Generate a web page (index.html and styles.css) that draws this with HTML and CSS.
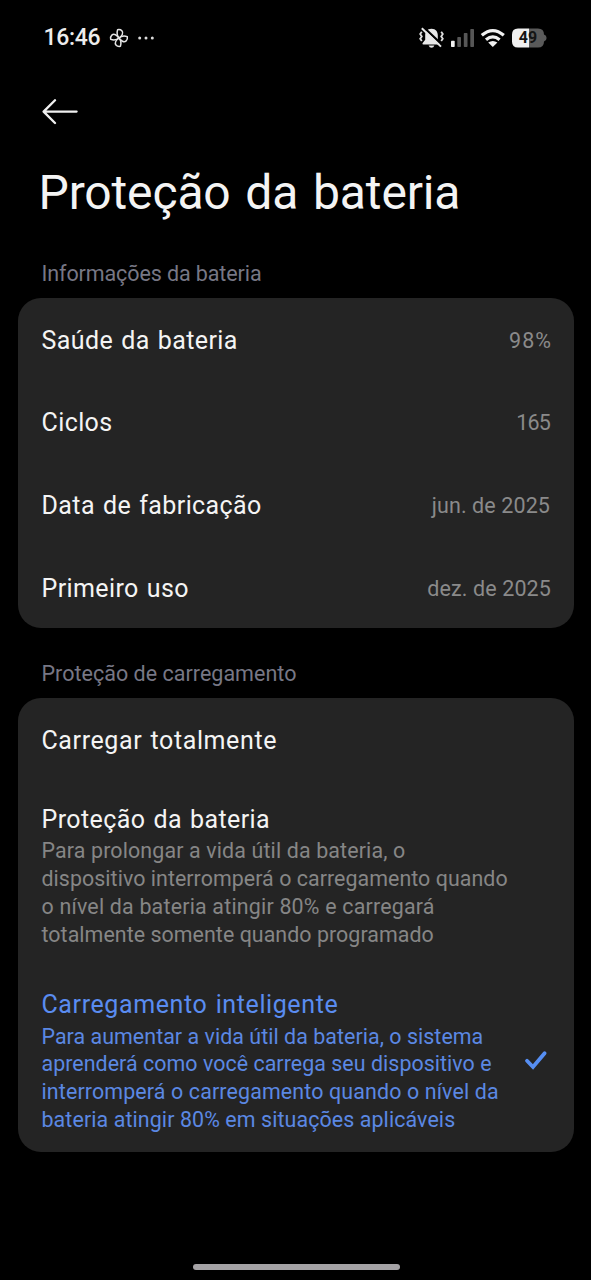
FILE: index.html
```
<!DOCTYPE html>
<html lang="pt-BR">
<head>
<meta charset="utf-8">
<title>Proteção da bateria</title>
<link rel="stylesheet" href="styles.css">
</head>
<body>
<div class="screen">
  <header class="status">
    <span class="clock">16:46</span>
    <svg class="pinwheel" width="20" height="20" viewBox="-10 -10 20 20" fill="none" stroke="#e4e4e4" stroke-width="1.5" stroke-linejoin="round">
      <path id="blade" d="M0 0C-1.8 -2 -2.4 -5 -1.4 -8.3C2.4 -9 4.6 -6.2 3.3 -3.5C2.5 -1.9 1.2 -.8 0 0Z"/>
      <use href="#blade" transform="rotate(90)"/>
      <use href="#blade" transform="rotate(180)"/>
      <use href="#blade" transform="rotate(270)"/>
    </svg>
    <svg class="dots" width="18" height="6" viewBox="0 0 18 6" fill="#dcdcdc"><circle cx="2.7" cy="3" r="1.5"/><circle cx="9" cy="3" r="1.5"/><circle cx="15.3" cy="3" r="1.5"/></svg>
    <div class="indicators">
      <svg width="27" height="22" viewBox="0 0 27 22">
        <path d="M13.5 1.8C9 1.8 7.2 5 7.2 8.4V12.8L4.5 16.2Q4.2 17.4 5.4 17.4H21.6Q22.8 17.4 22.5 16.2L19.8 12.8V8.4C19.8 5 18 1.8 13.5 1.8Z" fill="#e8e8e8"/>
        <path d="M10.6 18.6H16.4Q15.6 20.8 13.5 20.8T10.6 18.6Z" fill="#e8e8e8"/>
        <path d="M3.8 4.8L2.2 7.1L3.8 9.4L2.2 11.7L3.8 14M23.2 4.8L24.8 7.1L23.2 9.4L24.8 11.7L23.2 14" fill="none" stroke="#e0e0e0" stroke-width="1.8"/>
        <path d="M5.5 .1L24.7 18.4" stroke="#000" stroke-width="2.2"/>
        <path d="M3.8 1.2L23 19.6" stroke="#e8e8e8" stroke-width="2"/>
      </svg>
      <svg class="signal" width="24" height="20" viewBox="0 0 24 20" fill="#565656">
        <rect x="0" y="12.8" width="3.7" height="6.2" rx=".7" fill="#f2f2f2"/>
        <rect x="6.3" y="9" width="3.7" height="10" rx=".7"/>
        <rect x="12.8" y="5" width="3.7" height="14" rx=".7"/>
        <rect x="19.3" y="1" width="3.7" height="18" rx=".7"/>
      </svg>
      <svg class="wifi" width="26" height="20" viewBox="0 0 26 20" fill="none" stroke="#f0f0f0" stroke-width="3.2">
        <path d="M1.8 7.3Q12.8 -2.2 23.8 7.3"/>
        <path d="M6 11.8Q12.8 6 19.6 11.8"/>
        <path d="M8.2 14.6Q12.8 11.2 17.4 14.6L12.8 19Z" fill="#f0f0f0" stroke="none"/>
      </svg>
      <div class="battery">
        <svg width="36" height="20" viewBox="0 0 36 20">
          <path d="M6 .5H17V19.5H6Q0 19.5 0 13.5V6.5Q0 .5 6 .5Z" fill="#f0f0f0"/>
          <path d="M17 .5H26Q32 .5 32 6.5Q34.6 7.2 34.6 10T32 13.5Q32 19.5 26 19.5H17Z" fill="#5a5a5a"/>
        </svg>
        <span class="level">49</span>
      </div>
    </div>
  </header>

  <nav class="back">
    <svg width="37" height="26" viewBox="0 0 37 26" fill="none" stroke="#f0f0f0" stroke-width="2.3" stroke-linecap="round" stroke-linejoin="round"><path d="M34.6 12.6H1.6M13 1.2L1.6 12.6L13 24"/></svg>
  </nav>

  <h1 class="title">Proteção da bateria</h1>

  <h2 class="label label-info">Informações da bateria</h2>
  <section class="card">
    <div class="row"><span class="name">Saúde da bateria</span><span class="value percent">98%</span></div>
    <div class="row"><span class="name">Ciclos</span><span class="value cycles">165</span></div>
    <div class="row"><span class="name">Data de fabricação</span><span class="value made">jun. de 2025</span></div>
    <div class="row"><span class="name">Primeiro uso</span><span class="value">dez. de 2025</span></div>
  </section>

  <h2 class="label label-charge">Proteção de carregamento</h2>
  <section class="card">
    <div class="row"><span class="name loose">Carregar totalmente</span></div>
    <div class="option">
      <div class="name">Proteção da bateria</div>
      <p class="text"><span class="line wider">Para prolongar a vida útil da bateria, o</span><span class="line">dispositivo interromperá o carregamento quando</span><span class="line widest">o nível da bateria atingir 80% e carregará</span><span class="line">totalmente somente quando programado</span></p>
    </div>
    <div class="option selected">
      <div class="copy">
        <div class="name loose">Carregamento inteligente</div>
        <p class="text"><span class="line">Para aumentar a vida útil da bateria, o sistema</span><span class="line">aprenderá como você carrega seu dispositivo e</span><span class="line wider">interromperá o carregamento quando o nível da</span><span class="line wide">bateria atingir 80% em situações aplicáveis</span></p>
      </div>
      <svg class="check" width="24" height="22" viewBox="0 0 24 22" fill="none" stroke="#568ef2" stroke-width="3.8" stroke-linecap="round" stroke-linejoin="miter"><path d="M3 11.8L9 18L20.6 4.3"/></svg>
    </div>
  </section>
  <div class="home"></div>
</div>
</body>
</html>
```
FILE: styles.css
```
* { box-sizing: border-box; margin: 0; padding: 0; }
body { background: #000; font-family: Roboto, "Noto Sans", sans-serif; color: #f4f4f4; }
svg { display: block; flex: none; }
.screen { width: 591px; height: 1280px; padding: 0 17px 0 18px; display: flex; flex-direction: column; overflow: hidden; white-space: nowrap; }

.status { height: 76px; padding: 0 27.5px 0 25.5px; display: flex; align-items: center; flex: none; }
.clock { font-size: 23px; font-weight: 500; letter-spacing: -.3px; line-height: 28px; color: #ececec; width: 65px; }
.dots { margin-left: 8px; }
.indicators { margin-left: auto; display: flex; align-items: center; }
.signal { margin-left: 6px; }
.wifi { margin-left: 5px; }
.battery { margin-left: 6px; width: 35px; position: relative; }
.level { position: absolute; left: 0; top: 0; width: 33px; line-height: 20px; text-align: center; font-size: 16px; font-weight: 700; color: #151515; }

.back { height: 71px; padding: 23px 0 0 23.5px; flex: none; }
.title { margin-top: 17px; padding-left: 20.5px; font-size: 48px; line-height: 58px; font-weight: 400; letter-spacing: -.14px; word-spacing: 3px; }
.label { padding-left: 23.5px; font-size: 21.5px; line-height: 30px; font-weight: 400; color: #777785; }
.label-info { margin: 37px 0 9px; letter-spacing: -.1px; }
.label-charge { margin: 30.5px 0 9.5px; letter-spacing: .02px; }

.card { background: #242424; border-radius: 23px; padding: 0 23px; }
.row { height: 82.6px; padding-top: 2px; display: flex; align-items: center; justify-content: space-between; }
.name { padding-left: .5px; font-size: 25px; line-height: 33px; letter-spacing: .4px; word-spacing: 1.5px; }
.loose { letter-spacing: .6px; }
.value { padding-top: 1px; font-size: 21.5px; line-height: 28px; letter-spacing: .12px; color: #8a8a8a; }
.percent { letter-spacing: 1px; margin-right: -1px; }
.cycles { letter-spacing: -.8px; margin-right: 1px; }
.made { letter-spacing: .1px; margin-right: 1px; }

.option { padding: 22px 0 19.5px; }
.text { padding: 1.5px 0 0 .5px; margin-bottom: -1.5px; font-size: 21.4px; line-height: 27.7px; letter-spacing: .05px; color: #868686; }
.line { display: block; }
.wide { letter-spacing: .1px; }
.wider { letter-spacing: .14px; }
.widest { letter-spacing: .2px; }
.selected { display: flex; align-items: center; justify-content: space-between; color: #5a8cf0; }
.selected .text { color: #5b88e3; }
.check { margin-right: 3px; }

.home { width: 207px; height: 6px; margin: 112.5px auto 0; border-radius: 3px; background: #a5a3a6; }
```
